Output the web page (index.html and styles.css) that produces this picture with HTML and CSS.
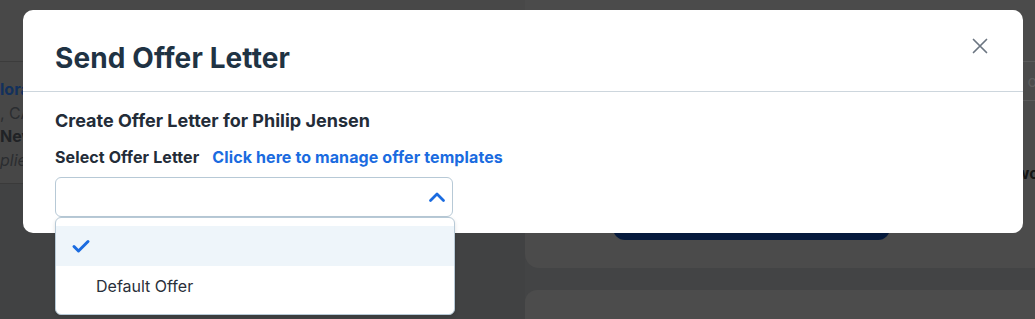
FILE: index.html
```html
<!DOCTYPE html>
<html lang="en">
<head>
<meta charset="utf-8">
<title>Send Offer Letter</title>
<link rel="stylesheet" href="styles.css">
</head>
<body>
<div class="page">
  <div class="left-col">
    <div class="left-top"></div>
    <div class="left-card">
      <div class="lc-name">lora</div>
      <div class="lc-loc">, CA</div>
      <div class="lc-new">New</div>
      <div class="lc-app">plied</div>
    </div>
    <div class="left-rest"></div>
  </div>
  <div class="right-col">
    <div class="r-card">
      <div class="r-top"></div>
      <div class="r-row"><span class="r-o">o</span></div>
      <div class="r-mid"><span class="r-wo">wo</span></div>
      <div class="r-btn-wrap"><div class="r-btn"></div></div>
    </div>
    <div class="r-card2"></div>
  </div>
</div>

<div class="overlay">
  <div class="modal">
    <div class="modal-header">
      <h1 class="modal-title">Send Offer Letter</h1>
      <button class="close-btn" aria-label="Close">
        <svg width="16" height="16" viewBox="0 0 16 16"><path d="M1.5 1.5 L14.5 14.5 M14.5 1.5 L1.5 14.5" stroke="#6b7581" stroke-width="1.7" fill="none" stroke-linecap="round"/></svg>
      </button>
    </div>
    <div class="modal-body">
      <h2 class="sub-title">Create Offer Letter for Philip Jensen</h2>
      <div class="field-label">
        <span class="label-text">Select Offer Letter</span>
        <a class="manage-link" href="#">Click here to manage offer templates</a>
      </div>
      <div class="select-wrap">
        <div class="select-box">
          <svg class="chev" width="18" height="12" viewBox="0 0 18 12"><path d="M2.5 9.5 L9 3 L15.5 9.5" stroke="#1a6be0" stroke-width="2.8" fill="none" stroke-linecap="round" stroke-linejoin="round"/></svg>
        </div>
        <ul class="menu">
          <li class="opt opt-selected">
            <svg width="20" height="16" viewBox="0 0 20 16"><path d="M3 8.5 L7.5 13 L17 3.5" stroke="#1a6be0" stroke-width="3" fill="none" stroke-linecap="round" stroke-linejoin="round"/></svg>
          </li>
          <li class="opt"><span class="opt-text">Default Offer</span></li>
        </ul>
      </div>
    </div>
  </div>
</div>
</body>
</html>
```

FILE: styles.css
```css
* { box-sizing: border-box; }
html, body { margin: 0; padding: 0; }
body {
  width: 1035px;
  height: 319px;
  overflow: hidden;
  background: #434445;
  font-family: Inter, "Noto Sans", Arial, sans-serif;
  position: relative;
}

.page {
  display: flex;
  height: 319px;
}
.left-col {
  width: 525px;
  display: flex;
  flex-direction: column;
}
.left-top {
  height: 62px;
  background: #484848;
  border-bottom: 1px solid #3c3c3c;
}
.left-card {
  height: 122px;
  background: #474747;
  border-bottom: 1px solid #3a3a3a;
  padding: 16px 0 0 0;
  font-size: 16px;
  line-height: 23.5px;
}
.lc-name { color: #12305c; font-weight: 700; }
.lc-loc { color: #2b2d30; }
.lc-new { color: #202225; font-weight: 700; }
.lc-app { color: #2b2d30; font-style: italic; }
.left-rest { flex: 1; background: #414243; }

.right-col {
  flex: 1;
  display: flex;
  flex-direction: column;
  gap: 22px;
}
.r-card {
  height: 268px;
  background: #4b4b4b;
  border-bottom-left-radius: 14px;
  display: flex;
  flex-direction: column;
}
.r-top { height: 62px; border-bottom: 1px solid #5a5a5a; }
.r-row {
  height: 39px;
  border-bottom: 1px solid #5a5a5a;
  display: flex;
  align-items: center;
  justify-content: flex-end;
  color: #5d5d5d;
  font-size: 16px;
  padding-right: 0;
}
.r-o { margin-right: -2px; }
.r-mid {
  height: 82px;
  display: flex;
  align-items: flex-end;
  justify-content: flex-end;
  font-weight: 700;
  color: #151515;
  font-size: 16px;
}
.r-wo { margin-right: -4px; line-height: 20px; }
.r-btn-wrap {
  padding: 12px 0 0 88px;
}
.r-btn {
  width: 277px;
  height: 45px;
  background: #061a3c;
  border-radius: 12px;
}
.r-card2 {
  flex: 1;
  background: #4c4c4c;
  border-top-left-radius: 12px;
}

.overlay {
  position: absolute;
  inset: 0;
}
.modal {
  position: absolute;
  top: 10px;
  left: 23px;
  width: 1000px;
  height: 223px;
  background: #ffffff;
  border-radius: 10px;
}
.modal-header {
  height: 82px;
  border-bottom: 1px solid #cdd6dd;
  display: flex;
  align-items: center;
  justify-content: space-between;
  padding: 0 26px 0 32px;
}
.modal-title {
  margin: 0;
  font-size: 28px;
  font-weight: 700;
  color: #1f3344;
  line-height: 34px;
  padding-top: 14px;
  letter-spacing: 0.1px;
}
.close-btn {
  border: 0;
  background: none;
  padding: 0;
  width: 16px;
  height: 16px;
  margin-top: -10px;
  margin-right: 9px;
  display: flex;
}
.modal-body {
  padding: 18px 32px 0 32px;
}
.sub-title {
  margin: 0;
  font-size: 18px;
  font-weight: 700;
  color: #232c38;
  line-height: 22px;
}
.field-label {
  margin-top: 15px;
  display: flex;
  gap: 13px;
  font-size: 16px;
  font-weight: 700;
  line-height: 20px;
  letter-spacing: 0.1px;
}
.label-text { color: #232c38; }
.manage-link { color: #1a6be0; text-decoration: none; }
.select-wrap {
  position: relative;
  margin-top: 10px;
  width: 398px;
}
.select-box {
  height: 40px;
  border: 1px solid #b7c9d6;
  border-radius: 6px;
  display: flex;
  align-items: center;
  justify-content: flex-end;
  padding-right: 6px;
}
.menu {
  position: absolute;
  top: 40px;
  left: 0;
  width: 400px;
  margin: 0;
  padding: 8px 0 8px;
  list-style: none;
  background: #fff;
  border: 1px solid #b7c9d6;
  border-radius: 6px;
  box-shadow: 0 2px 4px rgba(0,0,0,0.12);
}
.opt {
  height: 40px;
  display: flex;
  align-items: center;
  padding-left: 15px;
}
.opt-selected { background: #eef5fa; }
.opt-text {
  padding-left: 25px;
  font-size: 16px;
  color: #2a2f3a;
}
```
